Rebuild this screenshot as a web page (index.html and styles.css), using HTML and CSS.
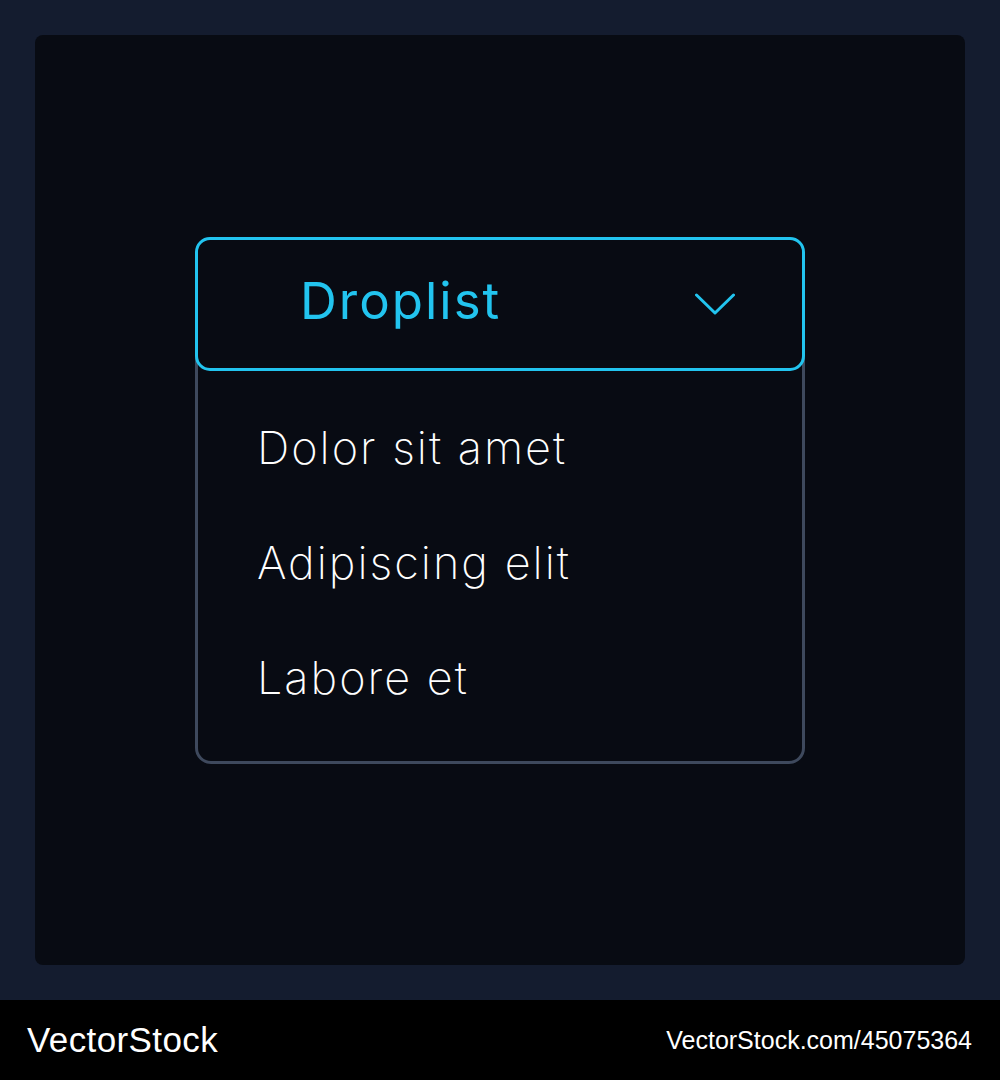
FILE: index.html
```html
<!DOCTYPE html>
<html>
<head>
<meta charset="utf-8">
<link rel="stylesheet" href="styles.css">
</head>
<body>
<div class="page">
  <div class="panel">
    <div class="dropdown">
      <div class="header">
        <span class="title">Droplist</span>
        <svg class="chevron" width="40" height="22" viewBox="0 0 40 22"><polyline points="1.5,2 20,20 38.5,2" fill="none" stroke="#22c4ef" stroke-width="3" stroke-linecap="round" stroke-linejoin="round"/></svg>
      </div>
      <ul class="list">
        <li class="item">Dolor sit amet</li>
        <li class="item">Adipiscing elit</li>
        <li class="item">Labore et</li>
      </ul>
    </div>
  </div>
</div>
<div class="footer">
  <span class="brand">VectorStock</span>
  <span class="ref">VectorStock.com/45075364</span>
</div>
</body>
</html>
```
FILE: styles.css
```css
html, body { margin: 0; padding: 0; }
body { background: #000; width: 1000px; font-family: Inter, "Noto Sans", sans-serif; }
.page { width: 1000px; height: 1000px; box-sizing: border-box; padding: 35px; background: #141c2f; }
.panel { width: 930px; height: 930px; border-radius: 8px; background: #080b13; display: flex; align-items: center; justify-content: center; }
.dropdown { width: 610px; display: flex; flex-direction: column; }
.header { position: relative; z-index: 1; height: 134px; box-sizing: border-box; border: 3px solid #22c4ef; border-radius: 15px; background: #080b13; display: flex; align-items: center; justify-content: space-between; padding: 0 67px 0 102px; }
.title { color: #22c4ef; font-size: 51px; font-weight: 400; letter-spacing: 2px; line-height: 1; margin-top: -6px; }
.chevron { display: block; }
.list { list-style: none; margin: -30px 0 0; padding: 46px 0 26px 59px; border: 3px solid #3e495d; border-radius: 16px; }
.item { color: #ffffff; font-size: 45px; font-weight: 200; letter-spacing: 2px; height: 115px; line-height: 115px; }
.footer { height: 80px; background: #000; display: flex; align-items: center; justify-content: space-between; padding: 0 28px 0 27px; color: #fff; font-family: "Liberation Sans", Arial, sans-serif; }
.brand { font-size: 35px; letter-spacing: 0.4px; }
.ref { font-size: 25px; letter-spacing: 0; }
```
